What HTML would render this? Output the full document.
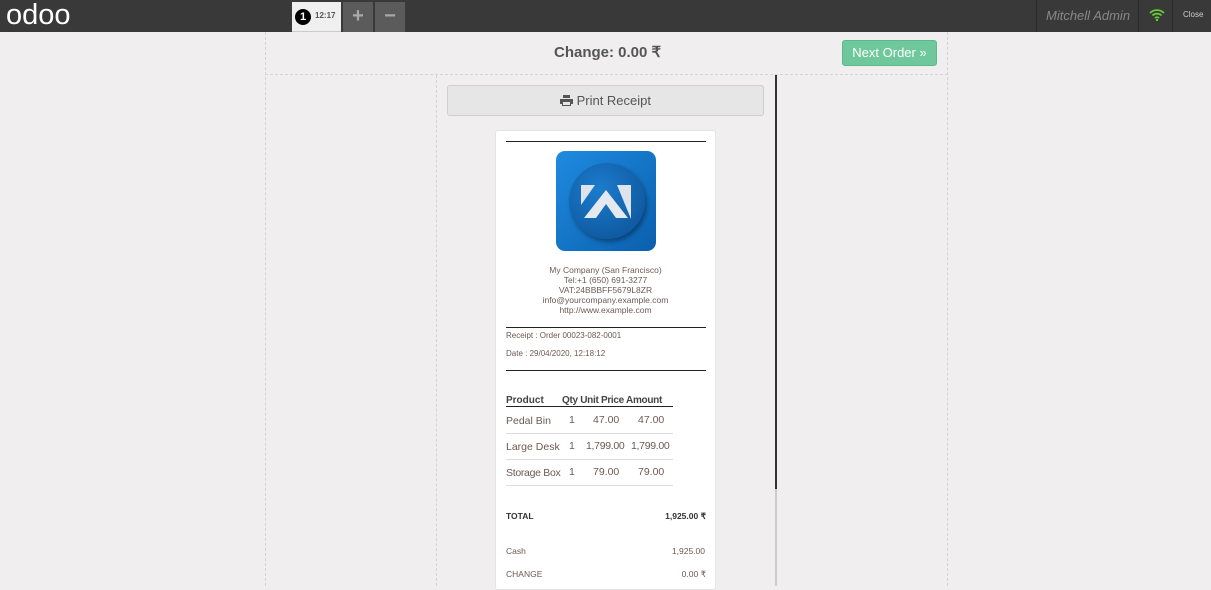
<!DOCTYPE html>
<html><head><meta charset="utf-8"><style>
*{margin:0;padding:0;box-sizing:border-box}
body{width:1211px;height:586px;overflow:hidden;background:#f0eeee;font-family:"Liberation Sans",sans-serif;position:relative;color:#555}
.a{position:absolute}
.top{left:0;top:0;width:1211px;height:32px;background:#393939}
.r{font-size:8.5px;color:#6a5a55}
</style></head><body>
<div class="a top"></div>
<div class="a" style="left:6px;top:1px;font-size:29px;color:#fff;letter-spacing:0px;line-height:28px">odoo</div>
<div class="a" style="left:292px;top:2px;width:49px;height:30px;background:#efefef;border-bottom:1px solid #ccc"></div>
<div class="a" style="left:295px;top:9px;width:16px;height:16px;border-radius:50%;background:#000;color:#fff;font-size:11px;font-weight:bold;text-align:center;line-height:16px">1</div>
<div class="a" style="left:315px;top:11px;font-size:8px;font-weight:bold;color:#555">12:17</div>
<div class="a" style="left:343px;top:2px;width:30px;height:30px;background:#5b5b5b;color:#aaa;font-size:20px;font-weight:bold;text-align:center;line-height:28px">+</div>
<div class="a" style="left:375px;top:2px;width:30px;height:30px;background:#5b5b5b;color:#aaa;font-size:20px;font-weight:bold;text-align:center;line-height:28px">−</div>
<div class="a" style="left:1036px;top:0;width:1px;height:32px;background:#2a2a2a"></div>
<div class="a" style="left:1046px;top:8px;font-size:13px;font-style:italic;color:#888">Mitchell Admin</div>
<div class="a" style="left:1138px;top:0;width:1px;height:32px;background:#2a2a2a"></div>
<svg class="a" style="left:1149px;top:8px" width="16" height="13" viewBox="0 0 16 13"><path d="M1 5a10 10 0 0 1 14 0M3.5 7.5a6.5 6.5 0 0 1 9 0M6 10a3 3 0 0 1 4 0" stroke="#6c3" stroke-width="1.8" fill="none"/><circle cx="8" cy="12" r="1.2" fill="#6c3"/></svg>
<div class="a" style="left:1172px;top:0;width:1px;height:32px;background:#2a2a2a"></div>
<div class="a" style="left:1183px;top:10px;font-size:8px;color:#ccc">Close</div>

<div class="a" style="left:265px;top:32px;height:554px;border-left:1px dashed #d5d3d3"></div>
<div class="a" style="left:947px;top:32px;height:554px;border-left:1px dashed #d5d3d3"></div>
<div class="a" style="left:265px;top:74px;width:683px;border-top:1px dashed #d5d3d3"></div>
<div class="a" style="left:436px;top:75px;height:511px;border-left:1px dashed #d5d3d3"></div>
<div class="a" style="left:554px;top:43px;font-size:15px;font-weight:bold;color:#555">Change: 0.00 ₹</div>
<div class="a" style="left:842px;top:40px;width:95px;height:26px;background:#6ec89b;border:1px solid #5fb88a;border-radius:3px;color:#fff;font-size:13px;line-height:24px;text-align:center">Next Order »</div>
<div class="a" style="left:447px;top:85px;width:317px;height:31px;background:#e6e6e6;border:1px solid #cfcfcf;border-radius:3px;font-size:13px;text-align:center;line-height:29px;color:#555"><svg width="13" height="11" viewBox="0 0 13 11" style="vertical-align:-1px"><path d="M3 0h7v3H3zM0 4h13v5h-2v2H2V9H0zM3 7v3h7V7z" fill="#555" fill-rule="evenodd"/></svg> Print Receipt</div>
<div class="a" style="left:775px;top:75px;width:2px;height:414px;background:#333"></div>
<div class="a" style="left:775px;top:489px;width:2px;height:97px;background:#ccc"></div>

<div class="a" style="left:495px;top:130px;width:221px;height:460px;background:#fff;border-radius:3px;border:1px solid #e4e4e4"></div>
<div class="a" style="left:506px;top:141px;width:200px;height:1px;background:#222"></div>
<div class="a" style="left:556px;top:151px;width:100px;height:100px;border-radius:9px;background:linear-gradient(135deg,#1f8be0,#0a5fad)"></div>
<div class="a" style="left:569px;top:163px;width:76px;height:76px;border-radius:50%;background:radial-gradient(circle at 40% 35%,#1c7ccd,#0b4f94);box-shadow:2px 3px 4px rgba(0,0,0,.35)"></div>
<svg class="a" style="left:580px;top:184px" width="52" height="36" viewBox="0 0 52 36"><path d="M1 1h14l-14 20zM37 1h14v34z" fill="#dde4ec"/><path d="M4 34L26 6L48 34H36L26 20L16 34z" fill="#e4e9ef"/></svg>
<div class="a r" style="left:495px;top:265px;width:221px;text-align:center;line-height:10px">My Company (San Francisco)<br>Tel:+1 (650) 691-3277<br>VAT:24BBBFF5679L8ZR<br>info@yourcompany.example.com<br>http://www.example.com</div>
<div class="a" style="left:506px;top:327px;width:200px;height:1px;background:#222"></div>
<div class="a" style="left:506px;top:331px;font-size:8px;color:#6a5a55">Receipt : Order 00023-082-0001</div>
<div class="a" style="left:506px;top:349px;font-size:8px;color:#6a5a55">Date : 29/04/2020, 12:18:12</div>
<div class="a" style="left:506px;top:370px;width:200px;height:1px;background:#222"></div>
<div class="a" style="left:506px;top:395px;font-size:10px;font-weight:bold;color:#444">Product</div>
<div class="a" style="left:562px;top:395px;font-size:10px;font-weight:bold;color:#444;letter-spacing:-0.3px">Qty Unit Price Amount</div>
<div class="a" style="left:506px;top:406px;width:167px;height:1px;background:#222"></div>
<div class="a" style="left:506px;top:433px;width:167px;height:1px;background:#ddd"></div>
<div class="a" style="left:506px;top:459px;width:167px;height:1px;background:#ddd"></div>
<div class="a" style="left:506px;top:485px;width:167px;height:1px;background:#ddd"></div>
<div class="a" style="left:506px;top:415px;font-size:10.5px;color:#6a5a55">Pedal Bin</div>
<div class="a" style="left:569px;top:414px;font-size:10.5px;color:#6a5a55">1</div>
<div class="a" style="left:593px;top:414px;font-size:10.5px;color:#6a5a55">47.00</div>
<div class="a" style="left:638px;top:414px;font-size:10.5px;color:#6a5a55">47.00</div>
<div class="a" style="left:506px;top:441px;font-size:10.5px;color:#6a5a55">Large Desk</div>
<div class="a" style="left:569px;top:440px;font-size:10.5px;color:#6a5a55">1</div>
<div class="a" style="left:586px;top:440px;font-size:10.5px;color:#6a5a55;letter-spacing:-0.3px">1,799.00</div>
<div class="a" style="left:631px;top:440px;font-size:10.5px;color:#6a5a55;letter-spacing:-0.3px">1,799.00</div>
<div class="a" style="left:506px;top:467px;font-size:10.5px;color:#6a5a55;letter-spacing:-0.3px">Storage Box</div>
<div class="a" style="left:569px;top:466px;font-size:10.5px;color:#6a5a55">1</div>
<div class="a" style="left:593px;top:466px;font-size:10.5px;color:#6a5a55">79.00</div>
<div class="a" style="left:638px;top:466px;font-size:10.5px;color:#6a5a55">79.00</div>
<div class="a" style="left:506px;top:511px;font-size:8.5px;font-weight:bold;color:#333">TOTAL</div>
<div class="a" style="left:606px;top:511px;width:100px;text-align:right;font-size:8.5px;font-weight:bold;color:#333">1,925.00 ₹</div>
<div class="a" style="left:506px;top:546px;font-size:8.5px;color:#6a5a55">Cash</div>
<div class="a" style="left:606px;top:546px;width:99px;text-align:right;font-size:8.5px;color:#6a5a55">1,925.00</div>
<div class="a" style="left:506px;top:569px;font-size:8.5px;color:#6a5a55">CHANGE</div>
<div class="a" style="left:606px;top:569px;width:100px;text-align:right;font-size:8.5px;color:#6a5a55">0.00 ₹</div>
</body></html>
